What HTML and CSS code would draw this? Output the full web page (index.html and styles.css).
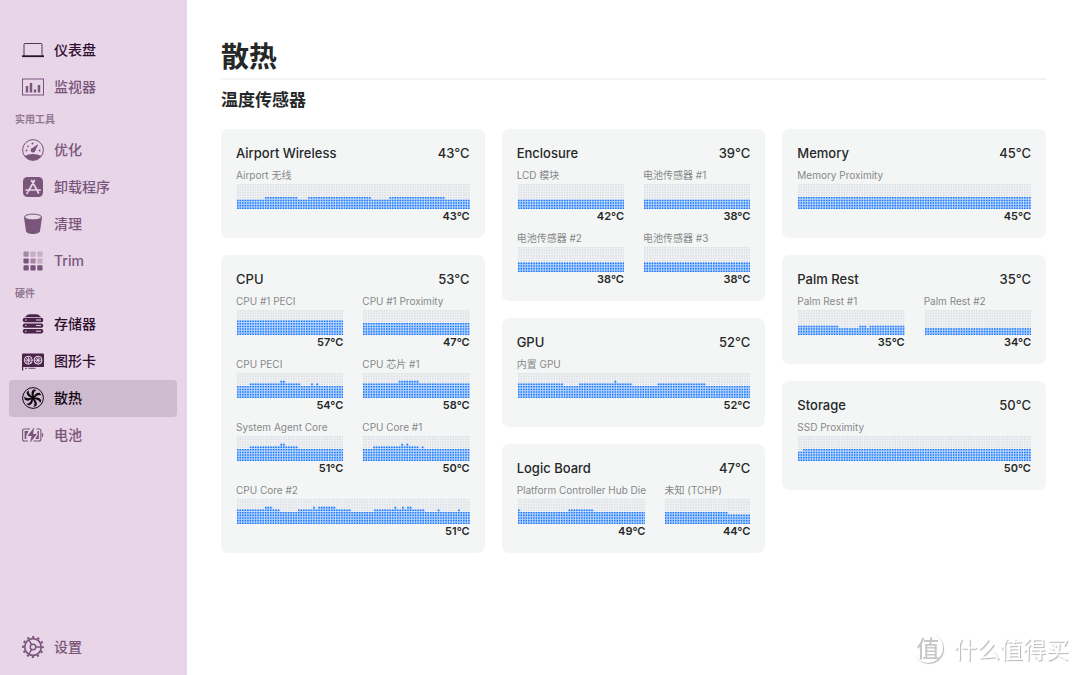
FILE: index.html
```html
<!DOCTYPE html>
<html lang="zh-CN">
<head>
<meta charset="utf-8">
<meta name="viewport" content="width=device-width, initial-scale=1">
<title>散热</title>
<link rel="stylesheet" href="styles.css">
</head>
<body>
<div class="app">
  <nav class="sidebar" aria-label="导航">
    <a class="nav-item strong" href="#dashboard">
      <svg class="icon" viewBox="0 0 22 22" fill="none" stroke="currentColor"><rect x="2" y="4.5" width="18" height="13" rx="1" stroke-width=".8"/><path d="M0 17.2h22" stroke-width="1.8"/></svg>
      仪表盘
    </a>
    <a class="nav-item" href="#monitor">
      <svg class="icon" viewBox="0 0 22 22" fill="none" stroke="currentColor"><rect x=".5" y="3" width="21" height="16"/><path d="M5 10v6.5M9 7v9.5M13 13.500v3M17 9v7.500" stroke-width="2.4"/></svg>
      监视器
    </a>
    <h2 class="nav-heading">实用工具</h2>
    <a class="nav-item" href="#optimize">
      <svg class="icon" viewBox="0 0 22 22"><circle cx="11" cy="11" r="10.400" fill="none" stroke="currentColor"/><path d="M2.500 17Q11 13 19.500 17A10.500 10.500 0 0 1 2.500 17Z" fill="currentColor"/><path d="M9.500 10.300 15.500 6l-3 6Z" fill="currentColor" stroke="currentColor" stroke-linejoin="round"/><circle cx="11" cy="11.300" r="2.300" fill="currentColor"/><g fill="currentColor"><circle cx="4.500" cy="11.500" r=".9"/><circle cx="6" cy="7.300" r=".9"/><circle cx="10.500" cy="4.600" r="1"/><circle cx="17.600" cy="11.500" r=".9"/></g></svg>
      优化
    </a>
    <a class="nav-item" href="#uninstall">
      <svg class="icon" viewBox="0 0 22 22"><rect x="1" y="1" width="20" height="20" rx="4.500" fill="currentColor"/><path d="M9.600 4.500 16.500 17M12.400 4.500 6.500 15M4 14h9M16 14h2.200M5.500 16.500l-.5.900" stroke="#e8d5e8" stroke-width="1.700" stroke-linecap="round"/></svg>
      卸载程序
    </a>
    <a class="nav-item" href="#clean">
      <svg class="icon" viewBox="0 0 22 22"><path d="M2 4.500 4 18c.4 4 13.600 4 14 0L20 4.500Z" fill="currentColor"/><ellipse cx="11" cy="4" rx="8.500" ry="2.900" fill="#e8d5e8" stroke="currentColor"/></svg>
      清理
    </a>
    <a class="nav-item" href="#trim">
      <svg class="icon" viewBox="0 0 22 22" fill="currentColor"><g opacity=".6"><rect x="1.500" y="1.500" width="5.200" height="5.200" rx=".8"/><rect x="8.400" y="8.400" width="5.200" height="5.200" rx=".8"/></g><g opacity=".3"><rect x="8.400" y="1.500" width="5.200" height="5.200" rx=".8"/><rect x="15.300" y="1.500" width="5.200" height="5.200" rx=".8"/><rect x="15.300" y="8.400" width="5.200" height="5.200" rx=".8"/></g><rect x="1.500" y="8.400" width="5.200" height="5.200" rx=".8"/><rect x="1.500" y="15.300" width="5.200" height="5.200" rx=".8"/><rect x="8.400" y="15.300" width="5.200" height="5.200" rx=".8"/><rect x="15.300" y="15.300" width="5.200" height="5.200" rx=".8"/></svg>
      Trim
    </a>
    <h2 class="nav-heading">硬件</h2>
    <a class="nav-item strong" href="#storage">
      <svg class="icon tinted" viewBox="0 0 22 22" fill="currentColor"><path d="M3 4 5.500 1.800Q6.500 1.200 8 1.200h6q1.500 0 2.500.6L19 4Z"/><rect x=".8" y="4.800" width="20.400" height="4.400" rx="1.800"/><rect x=".8" y="10.400" width="20.400" height="4.400" rx="1.800"/><rect x=".8" y="16" width="20.400" height="4.400" rx="1.800"/><path d="M14 7h5M14 12.600h5M14 18.200h5M3 7h1.500M3 12.600h1.500M3 18.200h1.500" stroke="#e8d5e8" stroke-width="1"/></svg>
      存储器
    </a>
    <a class="nav-item strong" href="#graphics">
      <svg class="icon tinted" viewBox="0 0 22 22" fill="currentColor"><path d="M0 4.500Q0 3.500 1 3.500h20q1 0 1 1V17H1.200v3.500H0Z"/><path d="M3 18.300h2M6.500 18.300h7" stroke="currentColor" stroke-width=".8"/><g fill="none" stroke="#e8d5e8"><circle cx="6.300" cy="10.200" r="4"/><circle cx="16" cy="10.200" r="4"/><path d="M6.300 6.200v8M2.300 10.200h8M3.500 7.400l5.600 5.600M9.100 7.400l-5.600 5.600M16 6.200v8M12 10.200h8M13.200 7.400l5.600 5.600M18.800 7.400l-5.600 5.600" stroke-width=".9"/></g></svg>
      图形卡
    </a>
    <a class="nav-item active" href="#cooling" aria-current="page">
      <svg class="icon" viewBox="0 0 22 22" fill="currentColor"><circle cx="11" cy="11" r="10.400" fill="none" stroke="currentColor" stroke-width="1"/><circle cx="11" cy="11" r="2.200"/><path id="blade" d="M10.500 9.500C8.900 7 9.200 4.300 11.300 2.600q1.600-.3 3 .3C11.900 4.200 11.300 6.500 11.900 9.500Z"/><use href="#blade" transform="rotate(51.400 11 11)"/><use href="#blade" transform="rotate(102.900 11 11)"/><use href="#blade" transform="rotate(154.300 11 11)"/><use href="#blade" transform="rotate(205.700 11 11)"/><use href="#blade" transform="rotate(257.100 11 11)"/><use href="#blade" transform="rotate(308.600 11 11)"/></svg>
      散热
    </a>
    <a class="nav-item" href="#battery">
      <svg class="icon" viewBox="0 0 22 22" fill="none" stroke="currentColor"><path d="M8 5H2.500Q.6 5 .6 7v8q0 2 1.900 2H6M14.500 5h2.500q1.900 0 1.900 2v8q0 2-1.900 2h-5.500" stroke-width="1.100"/><path d="M2.600 7h4L4.300 11.500V15H2.600ZM15.500 7h1.400v8h-3.700l3-5h-1Z" fill="currentColor" stroke="none"/><path d="M12.200 3.200 5.500 12h4L8 18.800 15 10h-4Z" fill="currentColor" stroke="none"/><path d="M20.300 9q1.400 2 0 4Z" fill="currentColor" stroke-width=".6"/></svg>
      电池
    </a>
    <a class="nav-item settings" href="#settings">
      <svg class="icon" viewBox="0 0 22 22" fill="none" stroke="currentColor"><circle cx="11" cy="11" r="8.300" stroke-width="1.700"/><circle cx="11" cy="11" r="10" stroke-width="1.900" stroke-dasharray="2.200 3.036" stroke-dashoffset="1.100"/><circle cx="11" cy="11" r="2.800" stroke-width="1.400"/><path d="M13.800 11H19M9.600 8.600 7 4M9.600 13.400 7 18" stroke-width="1.500"/></svg>
      设置
    </a>
  </nav>

  <main class="content">
    <h1 class="page-title">散热</h1>
    <h2 class="section-title">温度传感器</h2>
    <div class="columns">
      <div class="column">
        <section class="card">
          <header class="card-head"><h3>Airport Wireless</h3><span>43°C</span></header>
          <div class="sensors">
            <div class="sensor wide"><span class="label">Airport 无线</span><svg class="chart" data-runs="11x4 13x5 4x4 25x5 7x4 22x5 10x4"></svg><b class="value">43°C</b></div>
          </div>
        </section>
        <section class="card">
          <header class="card-head"><h3>CPU</h3><span>53°C</span></header>
          <div class="sensors">
            <div class="sensor"><span class="label">CPU #1 PECI</span><svg class="chart" data-runs="42x6"></svg><b class="value">57°C</b></div>
            <div class="sensor"><span class="label">CPU #1 Proximity</span><svg class="chart" data-runs="42x5"></svg><b class="value">47°C</b></div>
            <div class="sensor"><span class="label">CPU PECI</span><svg class="chart" data-runs="5x5 12x6 2x7 6x6 4x5 1x6 1x5 1x6 10x5"></svg><b class="value">54°C</b></div>
            <div class="sensor"><span class="label">CPU 芯片 #1</span><svg class="chart" data-runs="14x6 8x7 20x6"></svg><b class="value">58°C</b></div>
            <div class="sensor"><span class="label">System Agent Core</span><svg class="chart" data-runs="5x5 12x6 2x7 5x6 18x5"></svg><b class="value">51°C</b></div>
            <div class="sensor"><span class="label">CPU Core #1</span><svg class="chart" data-runs="4x5 11x6 1x7 1x6 1x7 4x6 1x5 1x6 18x5"></svg><b class="value">50°C</b></div>
            <div class="sensor wide"><span class="label">CPU Core #2</span><svg class="chart" data-runs="11x6 3x7 3x6 7x5 6x6 1x7 1x6 7x7 6x6 9x5 8x6 1x7 2x6 1x7 1x6 2x7 5x6 5x5 1x6 7x5 1x6 4x5"></svg><b class="value">51°C</b></div>
          </div>
        </section>
      </div>
      <div class="column">
        <section class="card">
          <header class="card-head"><h3>Enclosure</h3><span>39°C</span></header>
          <div class="sensors">
            <div class="sensor"><span class="label">LCD 模块</span><svg class="chart" data-runs="42x4"></svg><b class="value">42°C</b></div>
            <div class="sensor"><span class="label">电池传感器 #1</span><svg class="chart" data-runs="42x4"></svg><b class="value">38°C</b></div>
            <div class="sensor"><span class="label">电池传感器 #2</span><svg class="chart" data-runs="42x4"></svg><b class="value">38°C</b></div>
            <div class="sensor"><span class="label">电池传感器 #3</span><svg class="chart" data-runs="42x4"></svg><b class="value">38°C</b></div>
          </div>
        </section>
        <section class="card">
          <header class="card-head"><h3>GPU</h3><span>52°C</span></header>
          <div class="sensors">
            <div class="sensor wide"><span class="label">内置 GPU</span><svg class="chart" data-runs="18x6 6x5 14x6 1x7 6x6 10x5 19x6 18x5"></svg><b class="value">52°C</b></div>
          </div>
        </section>
        <section class="card">
          <header class="card-head"><h3>Logic Board</h3><span>47°C</span></header>
          <div class="sensors uneven">
            <div class="sensor"><span class="label">Platform Controller Hub Die</span><svg class="chart" data-runs="1x6 19x5 10x6 21x5"></svg><b class="value">49°C</b></div>
            <div class="sensor"><span class="label">未知 (TCHP)</span><svg class="chart" data-runs="25x5 9x4"></svg><b class="value">44°C</b></div>
          </div>
        </section>
      </div>
      <div class="column">
        <section class="card">
          <header class="card-head"><h3>Memory</h3><span>45°C</span></header>
          <div class="sensors">
            <div class="sensor wide"><span class="label">Memory Proximity</span><svg class="chart" data-runs="92x5"></svg><b class="value">45°C</b></div>
          </div>
        </section>
        <section class="card">
          <header class="card-head"><h3>Palm Rest</h3><span>35°C</span></header>
          <div class="sensors">
            <div class="sensor"><span class="label">Palm Rest #1</span><svg class="chart" data-runs="16x4 8x3 3x4 1x3 14x4"></svg><b class="value">35°C</b></div>
            <div class="sensor"><span class="label">Palm Rest #2</span><svg class="chart" data-runs="42x3"></svg><b class="value">34°C</b></div>
          </div>
        </section>
        <section class="card">
          <header class="card-head"><h3>Storage</h3><span>50°C</span></header>
          <div class="sensors">
            <div class="sensor wide"><span class="label">SSD Proximity</span><svg class="chart" data-runs="2x4 90x5"></svg><b class="value">50°C</b></div>
          </div>
        </section>
      </div>
    </div>
  </main>
  <div class="watermark"><span class="seal">值</span>什么值得买</div>
</div>
<script src="charts.js"></script>
</body>
</html>
```
FILE: styles.css
```css
* { box-sizing: border-box; }

body {
  margin: 0;
  background: #fff;
  color: #262828;
  font-family: Inter, "Noto Sans CJK SC", sans-serif;
}

h1, h2, h3 { margin: 0; }

.app {
  display: flex;
  min-height: 100vh;
}

.sidebar {
  flex: none;
  display: flex;
  flex-direction: column;
  width: 187px;
  padding: 32px 10px 9px 9px;
  background: #e8d5e8;
}

.nav-item {
  display: flex;
  align-items: center;
  gap: 10px;
  height: 37px;
  padding: 0 13px 1px;
  border-radius: 4px;
  color: #7a557a;
  font-size: 14px;
  font-weight: 500;
  line-height: 20px;
  text-decoration: none;
}

.nav-item.strong { color: #2d0f2f; }
.nav-item.active { background: #cfbbcf; color: #120812; }
.nav-item.settings { margin-top: auto; }

.icon {
  flex: none;
  width: 22px;
  height: 22px;
}

.icon.tinted { color: #4a2449; }

.nav-heading {
  height: 26px;
  padding-left: 6px;
  color: #917791;
  font-size: 10px;
  font-weight: 600;
  line-height: 26px;
}

.content {
  flex: 1;
  min-width: 0;
  padding: 36px 34px;
}

.page-title {
  padding-top: 1px;
  padding-bottom: 1px;
  border-bottom: 2px solid #f2f3f3;
  font-size: 28px;
  font-weight: 600;
  line-height: 40px;
}

.section-title {
  margin: 8px 0 17px;
  font-size: 17px;
  font-weight: 600;
  line-height: 24px;
}

.columns {
  display: grid;
  grid-template-columns: repeat(3, 1fr);
  gap: 17px;
  align-items: start;
}

.column {
  display: grid;
  gap: 17px;
}

.card {
  padding: 15px 15px 14px;
  border-radius: 7px;
  background: #f4f6f6;
}

.card-head {
  display: flex;
  justify-content: space-between;
  margin-bottom: 6px;
  font-size: 13px;
  font-weight: 500;
  line-height: 18px;
}

.card-head h3 {
  font-size: 13px;
  font-weight: 500;
}

.sensors {
  display: grid;
  grid-template-columns: 1fr 1fr;
  gap: 7px 19px;
}

.sensors.uneven { grid-template-columns: 3fr 2fr; }
.sensor.wide { grid-column: 1 / -1; }

.sensor {
  display: flex;
  flex-direction: column;
  min-width: 0;
}

.label {
  height: 15px;
  margin-bottom: 1px;
  color: #868888;
  font-size: 10px;
  line-height: 15px;
  white-space: nowrap;
}

.chart {
  display: block;
  width: 100%;
  height: 25px;
  padding-left: 1px;
}

.chart .empty { fill: #dcdfe4; }
.chart .empty-gap { fill: #f1f2f4; }
.chart .filled { fill: #1a76ff; }
.chart .filled-gap { fill: #bcd8fc; }

.value {
  font-size: 11px;
  font-weight: 600;
  line-height: 15px;
  text-align: right;
}

.watermark {
  position: fixed;
  right: 11px;
  bottom: 12px;
  display: flex;
  align-items: center;
  gap: 11px;
  color: #fff;
  font-family: "Noto Sans CJK SC", sans-serif;
  font-size: 23px;
  line-height: 30px;
  text-shadow: 1px 1px 1px #b4b4b4;
}

.seal {
  width: 30px;
  height: 30px;
  border-radius: 50%;
  box-shadow: 1px 1px 1px #b8b8b8;
  color: #c8c8c8;
  font-weight: 500;
  line-height: 28px;
  text-align: center;
  text-shadow: none;
}
```
FILE: charts.js
```js
// Each run is "<columns>x<height>" on a grid that is ten dots high.
const ROWS = 10;
const CELL = 10;
const DOT = 6;

function drawChart(svg) {
  const runs = svg.dataset.runs.split(" ").map(run => run.split("x").map(Number));
  const columns = runs.reduce((sum, [count]) => sum + count, 0);
  const width = columns * CELL - CELL + DOT;
  const height = ROWS * CELL - CELL + DOT;
  let shapes = `<rect class="empty-gap" width="${width}" height="${height}"/>`;
  let filledDots = "";
  let emptyDots = "";
  let column = 0;
  for (const [count, level] of runs) {
    const top = (ROWS - level) * CELL;
    const span = Math.min(count * CELL, width - column * CELL);
    shapes += `<rect class="filled-gap" x="${column * CELL}" y="${top}" width="${span}" height="${height - top}"/>`;
    for (let i = 0; i < count; i++, column++) {
      for (let row = 0; row < ROWS; row++) {
        const dot = `M${column * CELL} ${row * CELL}h${DOT}v${DOT}h-${DOT}z`;
        if (row >= ROWS - level) filledDots += dot;
        else emptyDots += dot;
      }
    }
  }
  svg.setAttribute("viewBox", `0 0 ${width} ${height}`);
  svg.setAttribute("preserveAspectRatio", "none");
  svg.innerHTML = `${shapes}<path class="empty" d="${emptyDots}"/><path class="filled" d="${filledDots}"/>`;
}

document.querySelectorAll(".chart").forEach(drawChart);
```
